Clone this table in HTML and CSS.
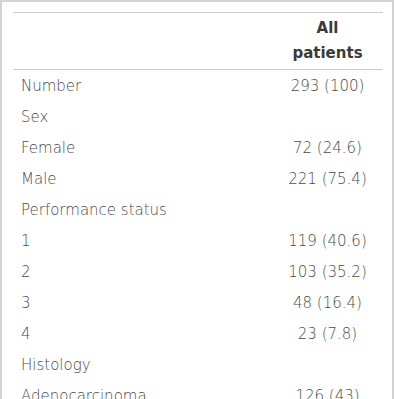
FILE: index.html
```html
<!DOCTYPE html>
<html>
<head>
<meta charset="utf-8">
<link rel="stylesheet" href="styles.css">
</head>
<body>
<div class="frame">
  <table class="stats">
    <thead>
      <tr><th class="label"></th><th class="value">All<br>patients</th></tr>
    </thead>
    <tbody>
      <tr><td class="label">Number</td><td class="value">293 (100)</td></tr>
      <tr><td class="label">Sex</td><td class="value"></td></tr>
      <tr><td class="label">Female</td><td class="value">72 (24.6)</td></tr>
      <tr><td class="label">Male</td><td class="value">221 (75.4)</td></tr>
      <tr><td class="label">Performance status</td><td class="value"></td></tr>
      <tr><td class="label">1</td><td class="value">119 (40.6)</td></tr>
      <tr><td class="label">2</td><td class="value">103 (35.2)</td></tr>
      <tr><td class="label">3</td><td class="value">48 (16.4)</td></tr>
      <tr><td class="label">4</td><td class="value">23 (7.8)</td></tr>
      <tr><td class="label">Histology</td><td class="value"></td></tr>
      <tr><td class="label">Adenocarcinoma</td><td class="value">126 (43)</td></tr>
    </tbody>
  </table>
</div>
</body>
</html>
```
FILE: styles.css
```css
html, body {
  margin: 0;
  padding: 0;
  background: #fff;
}
.frame {
  border: 2px solid #d3d3d3;
  padding: 10px 9px 20px 11px;
  font-family: "DejaVu Sans", sans-serif;
  color: #333;
}
.stats {
  width: 370px;
  border-collapse: collapse;
  border-top: 1px solid #ccc;
}
.stats th, .stats td {
  padding: 4px 8px 2px;
  line-height: 25px;
  font-size: 15px;
  vertical-align: top;
}
.stats th {
  font-weight: bold;
  color: #3a3a3a;
  padding-top: 3px;
  padding-bottom: 3px;
  border-bottom: 1px solid #ccc;
}
.stats td {
  font-weight: 200;
  color: #4a4a4a;
}
.stats .label {
  text-align: left;
}
.stats .value {
  text-align: center;
  width: 95px;
}
```
